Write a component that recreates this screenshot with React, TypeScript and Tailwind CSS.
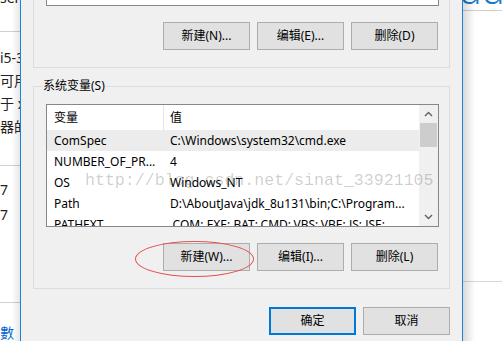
const rows = [
  { name: "ComSpec", value: "C:\\Windows\\system32\\cmd.exe", selected: true },
  { name: "NUMBER_OF_PR...", value: "4" },
  { name: "OS", value: "Windows_NT" },
  { name: "Path", value: "D:\\AboutJava\\jdk_8u131\\bin;C:\\Program..." },
  { name: "PATHEXT", value: ".COM;.EXE;.BAT;.CMD;.VBS;.VBE;.JS;.JSE;..." },
];

function Btn({ label, primary = false }: { label: string; primary?: boolean }) {
  return (
    <button
      className={
        "h-[28px] w-[87px] bg-[#e1e1e1] text-[12px] text-black flex items-center justify-center " +
        (primary ? "border-2 border-[#0078d7]" : "border border-[#adadad]")
      }
    >
      {label}
    </button>
  );
}

function ScrollBar() {
  return (
    <div className="flex w-[19px] flex-col items-center bg-[#f0f0f0]">
      <div className="flex h-[18px] w-full items-center justify-center">
        <svg width="9" height="6" viewBox="0 0 9 6">
          <polyline points="1,5 4.5,1.5 8,5" fill="none" stroke="#606060" strokeWidth="1.4" />
        </svg>
      </div>
      <div className="h-[24px] w-[17px] bg-[#cdcdcd]" />
      <div className="flex-1" />
      <div className="flex h-[18px] w-full items-center justify-center">
        <svg width="9" height="6" viewBox="0 0 9 6">
          <polyline points="1,1 4.5,4.5 8,1" fill="none" stroke="#606060" strokeWidth="1.4" />
        </svg>
      </div>
    </div>
  );
}

export default function App() {
  return (
    <div className="relative flex h-[341px] w-[502px] overflow-hidden bg-white font-['Noto_Sans','Noto_Sans_CJK_SC',sans-serif] text-black">
      {/* page behind, left */}
      <div className="relative w-[20px] shrink-0 overflow-hidden whitespace-nowrap text-[14px] text-[#222]">
        <div className="relative h-[44px] border-b border-[#d0d0d0]">
          <div className="-mt-[12px] leading-[20px]">sensor</div>
        </div>
        <div className="h-[134px] border-b border-[#d0d0d0] pt-[14px] leading-[23px]">
          <div>i5-3470</div>
          <div>可用内存</div>
          <div>于 x64</div>
          <div>器的笔</div>
        </div>
        <div className="h-[137px] border-b border-[#d0d0d0] pt-[11px] leading-[25px]">
          <div>7</div>
          <div>7</div>
        </div>
        <div className="pt-[20px] leading-[20px] text-[#0066cc]">數</div>
        <div className="absolute inset-y-0 right-0 w-[8px] bg-gradient-to-r from-transparent to-black/10" />
      </div>

      {/* dialog */}
      <div className="flex w-[443px] shrink-0 flex-col border-x border-[#1883d7] bg-[#f0f0f0] px-[12px] text-[12px]">
        {/* user variables group (cut at top) */}
        <div className="border-x border-b border-[#dcdcdc] pb-[17px] pl-[12px] pr-[10px]">
          <div className="h-[6px] border-x border-b border-[#828790] bg-white" />
          <div className="mt-[16px] flex justify-end gap-[7px] pr-[1px]">
            <Btn label="新建(N)..." />
            <Btn label="编辑(E)..." />
            <Btn label="删除(D)" />
          </div>
        </div>

        {/* system variables group */}
        <div className="relative mt-[18px] border border-[#dcdcdc] pb-[17px] pl-[12px] pr-[10px] pt-[17px]">
          <div className="absolute -top-[10px] left-[8px] bg-[#f0f0f0] px-[1px] leading-[18px]">系统变量(S)</div>
          <div className="flex h-[123px] overflow-hidden border border-[#828790] bg-white">
            <div className="flex-1 overflow-hidden whitespace-nowrap">
              <div className="flex h-[25px] items-center">
                <div className="flex h-full w-[117px] items-center border-r border-[#e5e5e5] pl-[7px]">变量</div>
                <div className="pl-[6px]">值</div>
              </div>
              {rows.map((r) => (
                <div key={r.name} className={"flex h-[21px] items-center " + (r.selected ? "bg-[#ececec]" : "")}>
                  <div className="w-[117px] pl-[7px]">{r.name}</div>
                  <div className="pl-[6px]">{r.value}</div>
                </div>
              ))}
            </div>
            <ScrollBar />
          </div>
          <div className="mt-[16px] flex justify-end gap-[7px] pr-[1px]">
            <Btn label="新建(W)..." />
            <Btn label="编辑(I)..." />
            <Btn label="删除(L)" />
          </div>
        </div>

        <div className="mt-[18px] flex justify-end gap-[7px]">
          <Btn label="确定" primary />
          <Btn label="取消" />
        </div>
      </div>

      {/* page behind, right */}
      <div className="relative flex-1 overflow-hidden whitespace-nowrap">
        <div className="h-[44px] border-b border-[#cfcfcf]">
          <div className="-ml-[4px] -mt-[33px] text-[38px] font-light leading-[44px] text-[#1979ca]">udo</div>
        </div>
        <div className="h-[271px] border-b border-[#d8d8d8]" />
        <div className="absolute inset-y-0 left-0 w-[12px] bg-gradient-to-r from-black/15 to-transparent" />
      </div>

      {/* red annotation */}
      <div className="pointer-events-none absolute left-[135px] top-[241px] h-[36px] w-[119px] rounded-[50%] border border-[#e55050]" />

      {/* watermark */}
      <div className="pointer-events-none absolute left-[85px] top-[171px] font-['Liberation_Mono',monospace] text-[16.6px] leading-[20px] text-black/20">
        http://blog.csdn.net/sinat_33921105
      </div>
    </div>
  );
}
